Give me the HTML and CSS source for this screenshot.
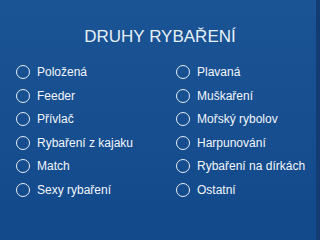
FILE: index.html
```html
<!DOCTYPE html>
<html lang="cs">
<head>
<meta charset="utf-8">
<link rel="stylesheet" href="styles.css">
</head>
<body>
<div class="page">
  <section class="panel">
    <h2 class="title">DRUHY RYBAŘENÍ</h2>
    <ul class="options">
      <li class="opt"><span class="radio"></span><span>Položená</span></li>
      <li class="opt"><span class="radio"></span><span>Plavaná</span></li>
      <li class="opt"><span class="radio"></span><span>Feeder</span></li>
      <li class="opt"><span class="radio"></span><span>Muškaření</span></li>
      <li class="opt"><span class="radio"></span><span>Přívlač</span></li>
      <li class="opt"><span class="radio"></span><span>Mořský rybolov</span></li>
      <li class="opt"><span class="radio"></span><span>Rybaření z kajaku</span></li>
      <li class="opt"><span class="radio"></span><span>Harpunování</span></li>
      <li class="opt"><span class="radio"></span><span>Match</span></li>
      <li class="opt"><span class="radio"></span><span>Rybaření na dírkách</span></li>
      <li class="opt"><span class="radio"></span><span>Sexy rybaření</span></li>
      <li class="opt"><span class="radio"></span><span>Ostatní</span></li>
    </ul>
  </section>
  <div class="edge"></div>
</div>
</body>
</html>
```
FILE: styles.css
```css
html, body {
  margin: 0;
  padding: 0;
  height: 100%;
  overflow: hidden;
  background: #134a8c;
}
body {
  font-family: "Liberation Sans", Arial, sans-serif;
  color: #eef4fb;
}
.page {
  display: flex;
  min-height: 100vh;
  background: linear-gradient(to bottom, #1b5494, #134a8c 213px);
}
.panel {
  flex: 1;
  padding-top: 27px;
}
.edge {
  width: 4px;
  background: #133c71;
}
.title {
  margin: 0;
  font-size: 17px;
  line-height: 20px;
  font-weight: normal;
  text-align: center;
  padding-left: 4px;
  color: #e6f0fa;
}
.options {
  list-style: none;
  margin: 13.5px 0 0;
  padding: 0;
  display: grid;
  grid-template-columns: 160px 156px;
  grid-auto-rows: 23.5px;
}
.opt {
  display: flex;
  align-items: center;
  gap: 7px;
  padding-left: 16px;
  font-size: 12px;
  color: #f2f6fb;
}
.radio {
  width: 14px;
  height: 14px;
  box-sizing: border-box;
  border: 1.5px solid #e8eef6;
  border-radius: 50%;
  flex: none;
}
```
